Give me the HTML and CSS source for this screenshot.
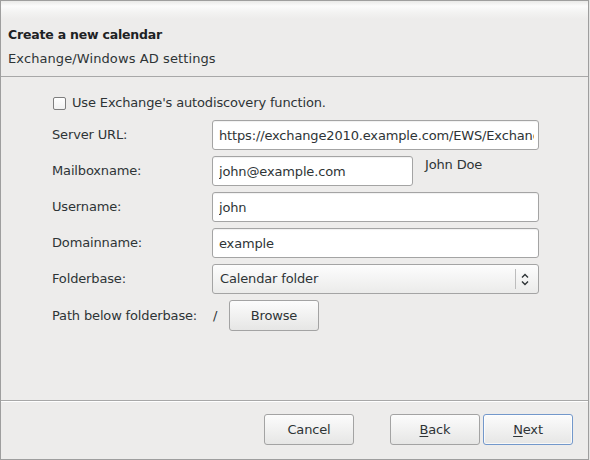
FILE: index.html
```html
<!DOCTYPE html>
<html>
<head>
<meta charset="utf-8">
<link rel="stylesheet" href="styles.css">
</head>
<body>
<div class="window">
  <header class="head">
    <div class="title">Create a new calendar</div>
    <div class="subtitle">Exchange/Windows AD settings</div>
  </header>
  <main class="content">
    <div class="check-row"><span class="checkbox"></span><span>Use Exchange's autodiscovery function.</span></div>
    <div class="form">
      <span class="lbl">Server URL:</span>
      <div class="cell"><input class="entry wide" value="https://exchange2010.example.com/EWS/Exchange.asmx"></div>

      <span class="lbl">Mailboxname:</span>
      <div class="cell top"><input class="entry short" value="john@example.com"><span class="fullname">John Doe</span></div>

      <span class="lbl">Username:</span>
      <div class="cell"><input class="entry wide" value="john"></div>

      <span class="lbl">Domainname:</span>
      <div class="cell"><input class="entry wide" value="example"></div>

      <span class="lbl">Folderbase:</span>
      <div class="cell">
        <div class="combo">
          <span class="combo-text">Calendar folder</span>
          <span class="combo-sep"></span>
          <svg class="combo-arrows" width="8" height="13" viewBox="0 0 8 13"><path d="M1 4.5 L4 1.5 L7 4.5 M1 8.5 L4 11.5 L7 8.5" fill="none" stroke="#2e3436" stroke-width="1.4"/></svg>
        </div>
      </div>

      <span class="lbl">Path below folderbase:</span>
      <div class="cell"><span class="slash">/</span><button class="btn browse">Browse</button></div>
    </div>
  </main>
  <footer class="foot">
    <button class="btn cancel">Cancel</button>
    <button class="btn"><u>B</u>ack</button>
    <button class="btn default"><u>N</u>ext</button>
  </footer>
</div>
</body>
</html>
```
FILE: styles.css
```css
html, body {
  margin: 0;
  padding: 0;
  background: #e4e4e3;
}
body {
  font-family: "DejaVu Sans", "Liberation Sans", sans-serif;
  font-size: 13px;
  line-height: 18px;
  letter-spacing: -0.15px;
  color: #2e3436;
}
.window {
  width: 589px;
  height: 460px;
  box-sizing: border-box;
  border: 1px solid #9e9e9e;
  background: #edeceb;
  display: flex;
  flex-direction: column;
}
.head {
  padding: 25px 7px 8px;
  border-bottom: 1px solid #a8a8a8;
  background: linear-gradient(to bottom, #e9e9e8 0px, #fbfbfb 5px, #f3f3f2 11px, #edeceb 18px, #edeceb 100%);
}
.title {
  font-weight: bold;
  font-size: 12.5px;
  letter-spacing: -0.2px;
  color: #1e2224;
}
.subtitle {
  margin-top: 6px;
  letter-spacing: 0.1px;
}
.content {
  flex: 1;
  padding: 17px 0 0 51px;
}
.check-row {
  display: flex;
  align-items: center;
  gap: 6px;
}
.checkbox {
  width: 11px;
  height: 11px;
  border: 1px solid #7e7e7e;
  border-radius: 2px;
  background: linear-gradient(#ffffff, #f2f2f2);
  margin-left: 1px;
}
.form {
  margin-top: 8px;
  display: grid;
  grid-template-columns: 160px 328px;
  row-gap: 6px;
  align-items: center;
}
.cell {
  display: flex;
  align-items: center;
}
.cell.top {
  align-items: flex-start;
}
.entry {
  box-sizing: border-box;
  height: 30px;
  border: 1px solid #a4a4a4;
  border-radius: 3px;
  background: #ffffff;
  box-shadow: inset 0 1px 1px rgba(0,0,0,0.06);
  font-family: inherit;
  font-size: 13px;
  letter-spacing: -0.15px;
  color: #2e3436;
  padding: 0 4px 0 6px;
  margin: 0;
  outline: none;
}
.wide {
  width: 327px;
}
.short {
  width: 201px;
}
.fullname {
  margin-left: 12px;
}
.combo {
  box-sizing: border-box;
  width: 327px;
  height: 30px;
  border: 1px solid #a4a4a4;
  border-radius: 3px;
  background: linear-gradient(#fdfdfd, #ebebea);
  display: flex;
  align-items: center;
  padding-left: 7px;
}
.combo-text {
  flex: 1;
}
.combo-sep {
  width: 1px;
  height: 20px;
  background: #bdbdbd;
  margin-right: 5px;
}
.combo-arrows {
  margin-right: 9px;
}
.slash {
  margin-left: 1px;
  width: 16px;
}
.btn {
  box-sizing: border-box;
  width: 90px;
  height: 31px;
  border: 1px solid #a3a3a3;
  border-radius: 3px;
  background: linear-gradient(#fcfcfc, #e6e6e5);
  font-family: inherit;
  font-size: 13px;
  letter-spacing: -0.15px;
  color: #2e3436;
  padding: 0;
  margin: 0;
}
.btn u {
  text-decoration-thickness: 1px;
  text-underline-offset: 2px;
}
.foot {
  border-top: 1px solid #a8a8a8;
  box-shadow: inset 0 1px 0 #ffffff;
  padding: 13px 15px 14px 0;
  display: flex;
  justify-content: flex-end;
  gap: 3px;
}
.cancel {
  margin-right: 33px;
}
.default {
  border-color: #7398cb;
  box-shadow: inset 0 0 0 1px rgba(255,255,255,0.7);
}
```
